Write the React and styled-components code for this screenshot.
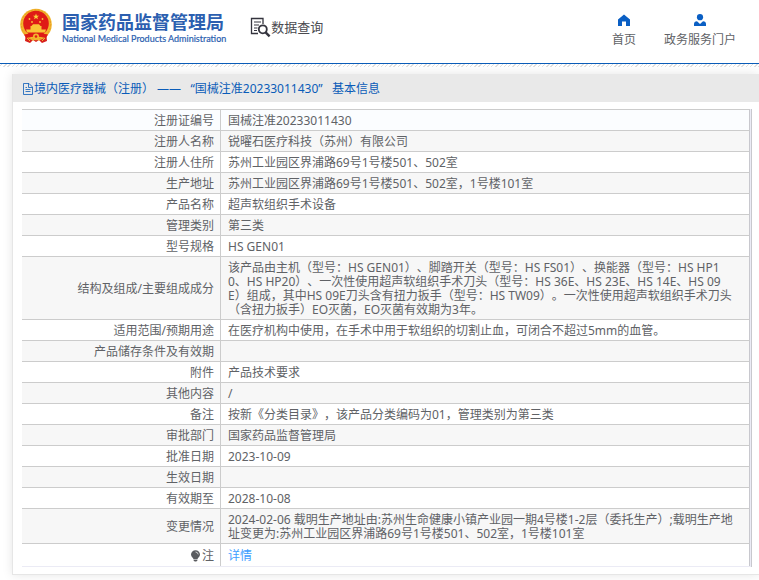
import React from "react";
import styled, { createGlobalStyle } from "styled-components";

const GlobalStyle = createGlobalStyle`
    * {
        box-sizing: border-box;
    }

    body {
        margin: 0;
        background: #fff;
        color: #606266;
        font-family: "Noto Sans", "Noto Sans CJK SC", sans-serif;
        font-size: 12px;
        line-height: 14px;
        text-spacing-trim: space-all;
        overflow-x: hidden;
    }
`

const Header = styled.header`
    display: flex;
    align-items: flex-start;
    height: 64px;
    padding: 8px 23px 0 19px;
    border-bottom: 1px solid #0a5cb8;
`

const Logo = styled.a`
    display: flex;
    gap: 9px;
    color: #2c5fb0;
    text-decoration: none;
`

const LogoText = styled.div`
    display: flex;
    flex-direction: column;
    white-space: nowrap;
    padding-top: 3px;
`

const LogoTitle = styled.strong`
    font-family: "Noto Sans CJK SC", sans-serif;
    font-size: 18px;
    line-height: 21px;
`

const LogoSubtitle = styled.span`
    font-family: Lato, sans-serif;
    font-size: 9px;
    line-height: 14px;
    -webkit-text-stroke: 0.2px #2c5fb0;
`

const Section = styled.div`
    display: flex;
    align-items: center;
    margin: 8px 0 0 24px;
    color: #4a4a4f;
    font-size: 13px;
    line-height: 22px;
    white-space: nowrap;
`

const Nav = styled.nav`
    display: flex;
    gap: 28px;
    margin-left: auto;
    padding-top: 5px;
`

const NavLink = styled.a`
    display: flex;
    flex-direction: column;
    align-items: center;
    gap: 6px;
    color: #606266;
    text-decoration: none;
    white-space: nowrap;
`

const Stripes = styled.div`
    height: 3px;
    background: repeating-linear-gradient(135deg, #fff 0 1px, #e0e0e0 1px 2px, #fff 2px 3px);
`

const Card = styled.main`
    margin: 7px 0 5px 12px;
    padding-bottom: 7px;
    border-left: 1px solid #e6e6e6;
    border-bottom: 1px solid #e6e6e6;
    box-shadow: 0 0 10px rgba(0, 0, 0, 0.1);
`

const CardTitle = styled.h1`
    display: flex;
    align-items: center;
    height: 28px;
    margin: 0 0 7px;
    padding: 2px 0 0 9px;
    background: #e9e9e9;
    color: #0a5cb8;
    font-size: 12px;
    font-weight: normal;
    white-space: pre;
`

const TableFrame = styled.div`
    margin: 0 7px 0 9px;
    border-right: 1px solid #c8c8ce;
`

const Table = styled.table`
    width: 100%;
    table-layout: fixed;
    border-spacing: 0;
    border-right: 1px solid #ebebf5;
    border-bottom: 1px solid #ebebf5;
`

const Row = styled.tr`
    background: #fff;

    &:first-child {
        background: #fbfdff;
    }

    &:nth-child(even) {
        background: #f7f7f7;
    }
`

const Label = styled.th`
    width: 199px;
    padding: 4px 6px 2px 0;
    border-top: 1px solid #ccc;
    border-right: 1px solid #ccc;
    font-weight: normal;
    text-align: right;
`

const Value = styled.td`
    height: 21px;
    padding: 4px 11px 2px 7px;
    border-top: 1px solid #ccc;
    border-right: 1px solid #c8c8ce;
    word-break: break-all;
`

const NoteLabel = styled.span`
    display: flex;
    justify-content: flex-end;
    align-items: center;
    gap: 1px;
`

const DetailLink = styled.a`
    display: block;
    padding: 1px 0;
    color: #409eff;
    text-decoration: none;
`

const rows = [
    ["注册证编号", "国械注准20233011430"],
    ["注册人名称", "锐曜石医疗科技（苏州）有限公司"],
    ["注册人住所", "苏州工业园区界浦路69号1号楼501、502室"],
    ["生产地址", "苏州工业园区界浦路69号1号楼501、502室，1号楼101室"],
    ["产品名称", "超声软组织手术设备"],
    ["管理类别", "第三类"],
    ["型号规格", "HS GEN01"],
    ["结构及组成/主要组成成分", "该产品由主机（型号：HS GEN01）、脚踏开关（型号：HS FS01）、换能器（型号：HS HP10、HS HP20）、一次性使用超声软组织手术刀头（型号：HS 36E、HS 23E、HS 14E、HS 09E）组成，其中HS 09E刀头含有扭力扳手（型号：HS TW09）。一次性使用超声软组织手术刀头（含扭力扳手）EO灭菌，EO灭菌有效期为3年。"],
    ["适用范围/预期用途", "在医疗机构中使用，在手术中用于软组织的切割止血，可闭合不超过5mm的血管。"],
    ["产品储存条件及有效期", ""],
    ["附件", "产品技术要求"],
    ["其他内容", "/"],
    ["备注", "按新《分类目录》，该产品分类编码为01，管理类别为第三类"],
    ["审批部门", "国家药品监督管理局"],
    ["批准日期", "2023-10-09"],
    ["生效日期", ""],
    ["有效期至", "2028-10-08"],
    ["变更情况", "2024-02-06 载明生产地址由:苏州生命健康小镇产业园一期4号楼1-2层（委托生产）;载明生产地址变更为:苏州工业园区界浦路69号1号楼501、502室，1号楼101室"],
]

const Emblem = () => (
    <svg width="34" height="36" viewBox="0 0 34 36" aria-hidden="true">
        <path d="M7 25 L6 33 L11 35 L14 32 L17 34 L20 32 L23 35 L28 33 L27 25Z" fill="#d8201c" />
        <circle cx="17" cy="16.5" r="15.8" fill="#f3b62c" />
        <circle cx="17" cy="16.5" r="14.6" fill="none" stroke="#e59a26" strokeWidth="1" strokeDasharray="2 1.5" />
        <circle cx="17" cy="15.5" r="12.8" fill="#df1a16" />
        <path d="M17 5.5l.8 2.2h2.3l-1.8 1.4.6 2.2-1.9-1.3-1.9 1.3.6-2.2-1.8-1.4h2.3z" fill="#fbd23c" />
        <g fill="#f9c436">
            <circle cx="10.5" cy="11" r="0.9" />
            <circle cx="23.5" cy="11" r="0.9" />
            <circle cx="13" cy="14" r="0.9" />
            <circle cx="21" cy="14" r="0.9" />
            <path d="M12.5 18l1.5-1.8h6l1.5 1.8zM11.5 18h11v3.4h-11zM7 21.4h20l-1 3H8z" />
        </g>
        <path d="M5 26.5Q17 23.5 29 26.5L27 30Q17 27 7 30Z" fill="#df1a16" />
        <circle cx="17" cy="28.5" r="3" fill="#f3b62c" />
        <circle cx="17" cy="28.5" r="1.3" fill="#df1a16" />
        <path d="M8 30l3 3M26 30l-3 3M13 31l1 2M21 31l-1 2" stroke="#f3b62c" strokeWidth="1" />
    </svg>
)

const SearchDocIcon = () => (
    <svg width="21" height="21" viewBox="0 0 21 21" fill="none" stroke="#34343e" aria-hidden="true">
        <path d="M13 7V1.5H1.5v15H8" strokeWidth="1.3" />
        <path d="M4 5h7M4 8h5M4 11h3.5M4 13.5h3" strokeWidth="1.2" />
        <circle cx="12.8" cy="12.3" r="4" strokeWidth="1.8" />
        <path d="M15.6 15.3l4 4" strokeWidth="2.4" />
    </svg>
)

const HomeIcon = () => (
    <svg width="14" height="14" viewBox="0 0 14 14" fill="#0a5fc4" aria-hidden="true">
        <path d="M7 1.5L1 6.5V13h4V8.5h4V13h4V6.5z" />
    </svg>
)

const UserIcon = () => (
    <svg width="14" height="14" viewBox="0 0 14 14" fill="#0a5fc4" aria-hidden="true">
        <circle cx="7" cy="4.2" r="3.1" />
        <path d="M1 13V11Q1 8.6 4 8.3L7 11l3-2.7Q13 8.6 13 11v2z" />
    </svg>
)

const DocIcon = () => (
    <svg width="12" height="12" viewBox="0 0 12 12" fill="none" stroke="#0a5cb8" aria-hidden="true">
        <path d="M1.5.5H7L10.5 4V11.5H1.5zM6.5.5V4.5H10.5M3.5 4.5h1.5M3.5 6.5h5M3.5 8.5h5" strokeWidth="0.8" />
    </svg>
)

const BulbIcon = () => (
    <svg width="11" height="12" viewBox="0 0 11 12" fill="#5a5c60" aria-hidden="true">
        <path d="M5.5.2A4.4 4.4 0 0 0 1 4.6C1 7 3.2 7.7 3.5 9.2h4C7.8 7.7 10 7 10 4.6A4.4 4.4 0 0 0 5.5.2z" />
        <path d="M3.7 9.8h3.6v.8l-1 1H4.7l-1-1z" />
        <path d="M5.5 2Q7.8 2 8.2 4.4" fill="none" stroke="#fff" strokeWidth="0.7" />
    </svg>
)

function App() {
    return (
        <>
            <GlobalStyle />
            <Header>
                <Logo href="#">
                    <Emblem />
                    <LogoText>
                        <LogoTitle>国家药品监督管理局</LogoTitle>
                        <LogoSubtitle>National Medical Products Administration</LogoSubtitle>
                    </LogoText>
                </Logo>
                <Section>
                    <SearchDocIcon />
                    数据查询
                </Section>
                <Nav>
                    <NavLink href="#">
                        <HomeIcon />
                        首页
                    </NavLink>
                    <NavLink href="#">
                        <UserIcon />
                        政务服务门户
                    </NavLink>
                </Nav>
            </Header>
            <Stripes />
            <Card>
                <CardTitle>
                    <DocIcon />
                    {"境内医疗器械（注册） ——   “国械注准20233011430”   基本信息"}
                </CardTitle>
                <TableFrame>
                    <Table>
                        <tbody>
                            {rows.map(([label, value]) => (
                                <Row key={label}>
                                    <Label scope="row">{label}</Label>
                                    <Value>{value}</Value>
                                </Row>
                            ))}
                            <Row>
                                <Label scope="row">
                                    <NoteLabel><BulbIcon />注</NoteLabel>
                                </Label>
                                <Value><DetailLink href="#">详情</DetailLink></Value>
                            </Row>
                        </tbody>
                    </Table>
                </TableFrame>
            </Card>
        </>
    )
}

export default App;
